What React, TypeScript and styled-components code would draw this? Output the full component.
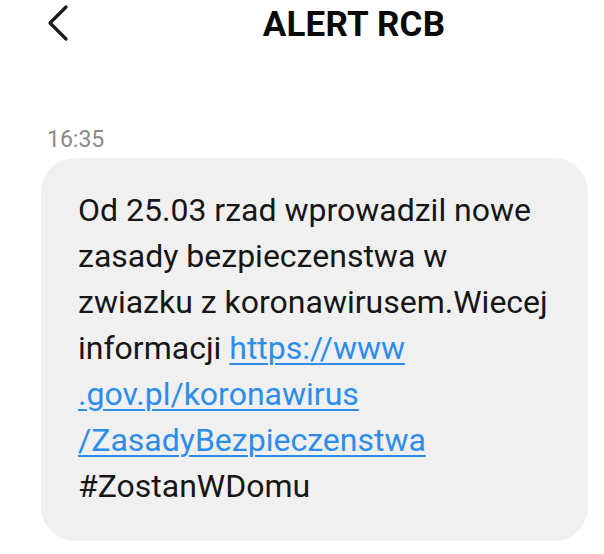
import React from 'react'
import styled, { createGlobalStyle } from 'styled-components'

const GlobalStyle = createGlobalStyle`
  html, body {
    margin: 0;
    padding: 0;
    background: #ffffff;
  }
  body {
    font-family: Roboto, "Liberation Sans", sans-serif;
    -webkit-font-smoothing: antialiased;
  }
`

const SScreen = styled.div`
  width: 604px;
  height: 554px;
  display: flex;
  flex-direction: column;
  background: #ffffff;
  overflow: hidden;
`

const SHeader = styled.div`
  height: 50px;
  display: grid;
  grid-template-columns: 140px 1fr 36px;
  align-items: center;
`

const SBackButton = styled.div`
  padding-left: 46px;
  display: flex;
  align-items: center;
  height: 100%;
  padding-bottom: 4px;
`

const STitle = styled.h1`
  margin: 0;
  text-align: center;
  font-size: 35px;
  font-weight: 700;
  color: #0a0a0a;
  letter-spacing: 0.2px;
  padding-bottom: 2px;
`

const SThread = styled.div`
  padding: 70px 16px 0 41px;
  display: flex;
  flex-direction: column;
`

const STime = styled.div`
  font-size: 23px;
  color: #8a8a8a;
  padding-left: 6px;
  margin-bottom: 3px;
  line-height: 30px;
  padding-top: 5px;
`

const SBubble = styled.div`
  width: 547px;
  box-sizing: border-box;
  background: #f0f0f0;
  border-radius: 34px;
  padding: 29px 16px 32px 37px;
  font-size: 32px;
  line-height: 46px;
  color: #161616;
`

const SLink = styled.a`
  color: #2c8eea;
  text-decoration: underline;
  text-decoration-thickness: 1.5px;
  text-underline-offset: 4px;
`

const BackIcon = () => (
  <svg width="24" height="38" viewBox="0 0 24 38">
    <path d="M20 3 L4 19 L20 35" fill="none" stroke="#1a1a1a" strokeWidth="3.2" strokeLinecap="round" strokeLinejoin="round" />
  </svg>
)

const App = () => {
  return (
    <SScreen>
      <GlobalStyle />
      <SHeader>
        <SBackButton>
          <BackIcon />
        </SBackButton>
        <STitle>ALERT RCB</STitle>
        <div />
      </SHeader>

      <SThread>
        <STime>16:35</STime>
        <SBubble>
          Od 25.03 rzad wprowadzil nowe<br />
          zasady bezpieczenstwa w<br />
          zwiazku z koronawirusem.Wiecej<br />
          informacji <SLink>https://www</SLink><br />
          <SLink>.gov.pl/koronawirus</SLink><br />
          <SLink>/ZasadyBezpieczenstwa</SLink><br />
          #ZostanWDomu
        </SBubble>
      </SThread>
    </SScreen>
  )
}

export default App
